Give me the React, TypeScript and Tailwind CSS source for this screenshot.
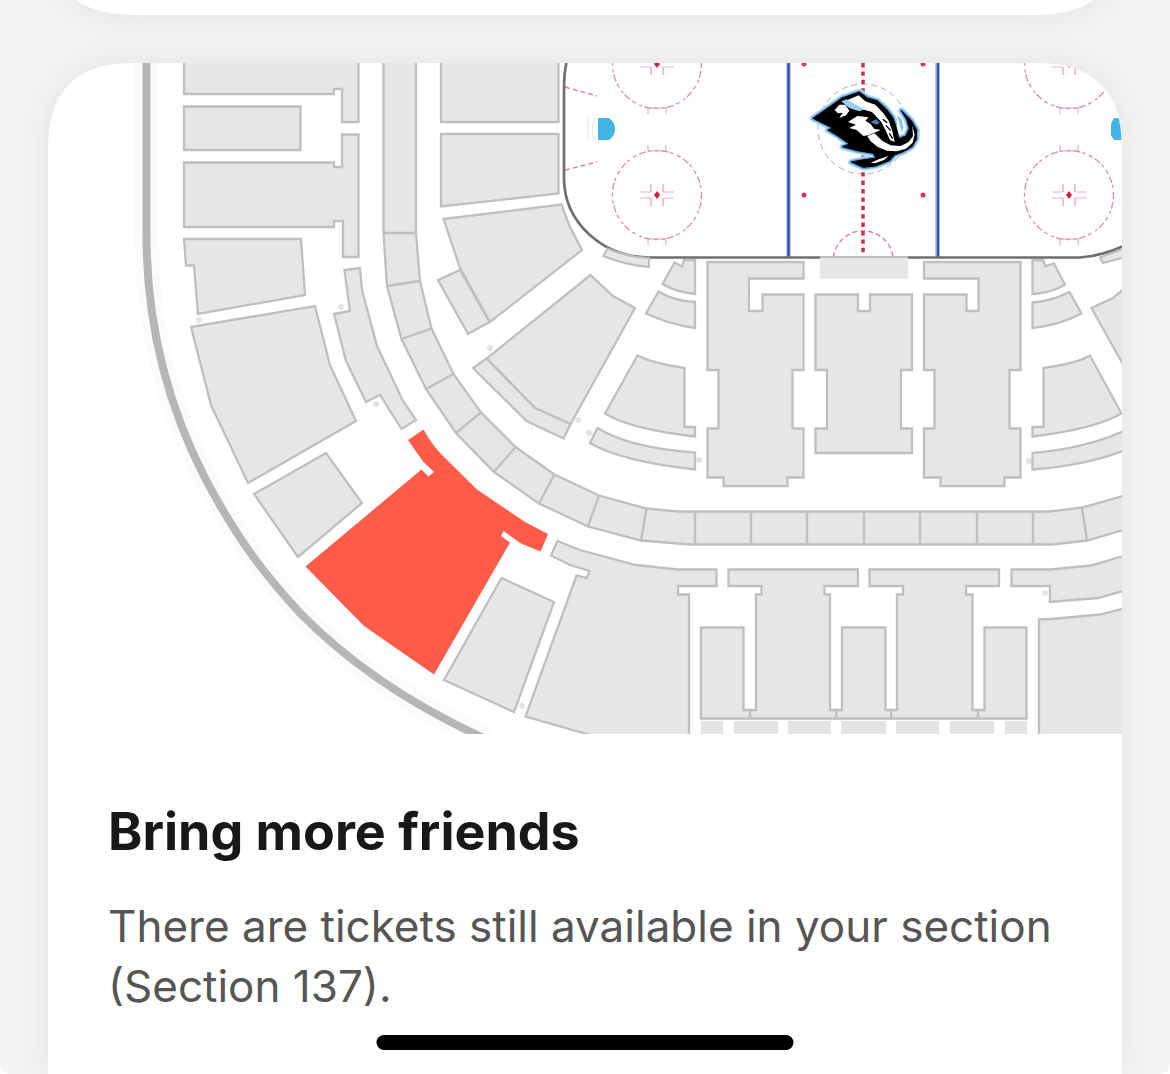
import React from 'react';

// Seating blocks, drawn in the map's own coordinate space
const sections = [
  // west side, upper bowl
  'M184 50V94H334V89H342V122H358.500V50Z',
  'M184 106.500H300.500V150H184Z',
  'M184 162.500H334V167H342V134.500H358.500V257H343V221H334V227H184Z',
  'M184 239H301L305 295L198 314L194 265.500H186Z',
  'M344.500 270L347 289L350 311L334 314L346 361L366 402L380 395L401.500 429L416 420L403 401L377 346L362 290L360 268Z',
  'M191 327L315 306L330 365L356 421L248 483L211 405Z',
  'M254 494L326 453L362 503L298 557Z',
  'M501.500 578L554 602L514 712L444 680Z',
  // west side, lower bowl
  'M441 50V122H558.500V50Z',
  'M441 134H558.500V193.500L441 206.500Z',
  'M443.500 219L561.500 204.500L569 225L582 250L490 322L460 268Z',
  'M460 270L438 280L468 334L489.500 322Z',
  'M590.500 275L613 296L635 308L570.500 424L535 408L486.500 358.500Z',
  'M486.500 358.500L473 368L526.500 421L563.500 438.500L570.500 424L535 408Z',
  'M637.500 355.500Q652 363 684.500 368V427H695V436.500Q630 429 605 413.500Z',
  'M597.500 428Q630 448 695 452.500V469.500Q620 461 590 443Z',
  'M674.500 262.500L682 266.500L684 260H695V294Q676 292 662.500 284Z',
  'M658.500 291.500Q674 301 695 302V328Q668 324 646 313.500Z',
  // south side, lower bowl
  'M707.500 262H803.500V278.500H749V311H762.500V294.500H803.500V370H792.500V428.500H803.500V477.500H787.500V486H723.500V477.500H707.500V428.500H718.500V370H707.500Z',
  'M815.500 294.500H858V311H870V294.500H912V370H901V428.500H912V453H815.500V428.500H827V370H815.500Z',
  'M924 262H1020.500V370H1009.500V428.500H1020.500V477.500H1004.500V486H940.500V477.500H924V428.500H934.500V370H924V294.500H966.500V311H978.500V278.500H924Z',
  'M1032.500 260H1043L1045.500 266L1054 263.500L1065 284.500Q1052 293 1032.500 294Z',
  'M1032.500 302.500Q1052 301 1069.500 292L1081.500 313.500Q1060 325 1032.500 328Z',
  'M1043.500 368Q1078 363 1090 355.500L1121.500 413.500Q1095 429 1032.500 436.500V427H1043.500Z',
  'M1032.500 453Q1090 448 1130 428V448Q1090 465 1032.500 469.500Z',
  'M1130 284L1113 298L1091.500 308L1130 377Z',
  // south side, upper bowl
  'M557.500 541L580 550L636 565L678 569.500H716.500V586H678V594.500H689V745H625L525.500 716.500L576.500 575.500L587 578L589.500 571L570 565L551 555.500Z',
  'M728.500 569.500H858V586H824.500V594.500H830V710H836.500V718.500H750V710H756V594.500H761.500V586H728.500Z',
  'M869.500 569.500H999V586H966V594.500H972.500V710H978V718.500H891V710H897V594.500H903V586H869.500Z',
  'M701 627.500H743.500V710H750V718.500H701Z',
  'M842 627.500H885.500V710H891V718.500H836.500V710H842Z',
  'M984.500 627.500H1026.500V718.500H978V710H984.500Z',
  'M1011.500 569.500H1050L1091 565.500L1130 554V589L1098 598L1050 602V586H1011.500Z',
  'M1039 619.500L1051 619L1100 614.500L1130 607V745H1039Z',
  // suite ring
  'M383.500 50V233L387 286L401.500 339L426 389L456 433L494 472L539 503.500L588 526.500L641 540.500L690 544.500H1052L1087 540.500L1130 528V494L1082 507.500L1050 511.500H678L646.500 508.500L599 495.500L554.500 474.500L515.500 447L481 412.500L453.500 374L431.500 328.500L420 281L416 233V50Z',
];

const suiteDividers =
  'M383.500 233H416M387 286L420 281M401.500 339L431.500 328.500M426 389L453.500 374M456 433L481 412.500M494 472L515.500 447M539 503.500L554.500 474.500M588 526.500L599 495.500M641 540.500L646.500 508.500M695 511V544M751 511V544M807 511V544M864 511V544M920 511V544M977 511V544M1033 511V544M1087 540.500L1082 507.500';

const selectedSection =
  'M408 440L423.500 429.500Q431 443 440 453L477 489.500L525 522L548 534L540.500 551.500L521 543.500L503.500 531L501 536L510 542.500L434 674.500L364 626L305.500 566.500L421.500 469.500L428.500 476.500L434 472L423 461.500Z';

const concourseTabs = [
  { x: 701, width: 22 },
  { x: 734, width: 44 },
  { x: 788, width: 43 },
  { x: 841, width: 45 },
  { x: 896, width: 43 },
  { x: 950, width: 44 },
  { x: 1005, width: 22 },
];

const markers = [
  [199, 320], [341, 307], [376, 404], [490, 348], [578, 420],
  [589, 433], [699, 460], [522, 706], [1029, 461], [1045, 593],
];

const outerWall =
  'M146.500 50V235C146.500 330 170 410 205 478C240 545 270 580 300 613C350 664 410 705 490 741';

const logoShape =
  'M33 115L78 84L120 54L172 36L196 54L225 62L252 86L272 112L284 145L290 176L312 168L322 145L314 118L298 92L328 122L344 150L343 178L330 200L302 216L278 224L262 242L220 258L184 262L148 246L180 240L222 234L214 220L166 212L122 200L142 192L108 168L78 150L92 144Z';

const FaceoffCircle: React.FC<{ cx: number; cy: number }> = ({ cx, cy }) => (
  <g transform={`translate(${cx} ${cy})`} fill="none" stroke="#e28a9c" strokeWidth="1">
    <circle r="44.500" strokeWidth="1.300" strokeDasharray="4 3 7 2 3 4" />
    <path d="M-17 -3H-6M-17 3H-6M6 -3H17M6 3H17" stroke="#eeb3be" />
    <path d="M-6 -11V-3M-6 3V11M6 -11V-3M6 3V11" />
    <path d="M-9 -50V-44H9V-50M-9 50V44H9V50" stroke="#e8a3b0" />
    <path d="M0 -4L3 0L0 4L-3 0Z" fill="#cf2145" stroke="none" />
  </g>
);

const TeamLogo: React.FC = () => (
  <g transform="translate(802 80) scale(0.3333)" strokeLinejoin="round">
    <path d={logoShape} fill="none" stroke="#b5daf6" strokeWidth="20" />
    <path d={logoShape} fill="#000" stroke="#5fa3dd" strokeWidth="11" />
    <path d={logoShape} fill="#000" stroke="#000" strokeWidth="3" />
    <g fill="#fff">
      <path d="M128 64L170 46L190 64L220 74L243 98L260 122L270 150L278 186L264 180L252 154L238 126L210 96L176 86L150 80Z" />
      <path d="M98 90L112 74L130 74L142 92L132 106L112 114L122 98L108 100Z" />
      <path d="M138 126L166 108L200 112L190 122L206 132L216 146L236 150L214 160L198 166L184 168L164 150L142 144L162 134Z" />
      <path d="M196 168L218 160L240 182L266 196L296 198L320 186L333 168L331 136L338 164L332 188L312 206L284 214L254 212L226 200L206 184Z" />
      <path d="M206 248L230 238L260 228L246 240L220 250Z" />
      <path d="M288 112L302 134L304 158L292 166L284 140Z" />
    </g>
    <path d="M118 64L134 58L158 72L188 88L172 94L142 84Z" fill="#9ccdf2" />
    <path d="M286 106L298 116L304 142L300 160L294 138Z" fill="#8ec3ef" />
    <path d="M206 126L222 118L234 128L222 134Z" fill="#3f7fb5" />
    <path d="M262 160L272 176M252 136L266 152M242 118L256 128" stroke="#000" strokeWidth="4" />
  </g>
);

const Rink: React.FC = () => (
  <g>
    <path
      d="M567 60Q564 72 564 86V178C564 222 602 257.500 650 257.500H1080Q1104 256 1130 243V50H567Z"
      fill="#fff"
    />
    <g fill="none" stroke="#e07a8f" strokeWidth="1.300" strokeDasharray="5 3">
      <path d="M565 87L597 96" />
      <path d="M565 170L597 162" />
      <path d="M833.500 257A30 30 0 0 1 893 257" />
    </g>
    <FaceoffCircle cx={657} cy={64} />
    <FaceoffCircle cx={657} cy={195} />
    <FaceoffCircle cx={1069} cy={64} />
    <FaceoffCircle cx={1069} cy={195} />

    <path d="M598 118H609Q615 122 615 129T609 140H598Z" fill="#42b4e6" />
    <path d="M596 118Q592 122 592 129T596 140M588 118V140" fill="none" stroke="#e3e3e6" />
    <path d="M1130 118H1114L1111 124V135L1114 140H1130Z" fill="#42b4e6" />

    <g fill="none" stroke="#a9bbe6" strokeWidth="4.500">
      <path d="M788.500 60V257M937.500 60V257" />
      <path d="M788.500 60V257M938 60V257" stroke="#3557a6" strokeWidth="2.500" />
    </g>
    <circle cx="863" cy="129" r="45" fill="none" stroke="#9fb0d8" strokeWidth="1" strokeDasharray="6 4" />
    <path d="M863 63V257" stroke="#d02c50" strokeWidth="3.500" strokeDasharray="4.400 4" />
    <g fill="#d2395a">
      {[804, 923].map((x) => (
        <React.Fragment key={x}>
          <circle cx={x} cy="64" r="2.500" />
          <circle cx={x} cy="195" r="2.500" />
        </React.Fragment>
      ))}
    </g>
    <TeamLogo />

    <path
      d="M567 60Q564 72 564 86V178C564 222 602 257.500 650 257.500H1080Q1104 256 1130 243"
      fill="none"
      stroke="#6f6f70"
      strokeWidth="2.700"
    />
    <g fill="#e6e6e8" stroke="#bdbdbf" strokeWidth="2">
      <path d="M607 248.500Q627 257 649 258V267Q625 265 603.500 256Z" />
      <path d="M1100 257.500L1130 246V256L1103 263Z" />
    </g>
    <path d="M820 257H908V278.500H820Z" fill="#e6e6e8" />
    <path d="M820 257H908" stroke="#bdbdbf" strokeWidth="2" />
  </g>
);

const SeatMap: React.FC = () => (
  <svg
    viewBox="48 63 1074 671"
    className="block w-full"
    role="img"
    aria-label="Arena seating map with Section 137 highlighted"
  >
    <path d={outerWall} fill="none" stroke="#fbfbfb" strokeWidth="24" />
    <path d={outerWall} fill="none" stroke="#b5b6b8" strokeWidth="8" />
    <g fill="#e3e3e6">
      {markers.map(([cx, cy]) => (
        <circle key={`${cx}-${cy}`} cx={cx} cy={cy} r="3" />
      ))}
      {concourseTabs.map((tab) => (
        <rect key={tab.x} x={tab.x} y="721" width={tab.width} height="20" />
      ))}
    </g>
    <g fill="#e6e6e8" stroke="#bfbfc1" strokeWidth="2.300">
      {sections.map((d) => (
        <path key={d} d={d} />
      ))}
      <path d={suiteDividers} />
    </g>
    <path d={selectedSection} fill="#ff5b49" />
    <Rink />
  </svg>
);

export default function App() {
  return (
    <div className="h-screen bg-white">
      <main className="relative flex h-full flex-col overflow-hidden rounded-b-[10px] bg-[#f4f4f4] px-12 font-[Inter,sans-serif]">
        <div className="-mt-[225px] mb-12 h-60 shrink-0 rounded-[92px] bg-white shadow-[0_0_36px_rgba(0,0,0,0.08)] [corner-shape:superellipse(1.4)]" />

        <article className="flex-1 overflow-hidden rounded-t-[92px] bg-white shadow-[0_0_36px_rgba(0,0,0,0.08)] [corner-shape:superellipse(1.4)]">
          <SeatMap />
          <div className="px-15 pt-16">
            <h2 className="text-[52px] leading-[68px] font-bold text-[#181818]">Bring more friends</h2>
            <p className="mt-[30px] text-[44px] leading-[60px] text-[#555]">
              There are tickets still available in your section (Section 137).
            </p>
          </div>
        </article>

        <div className="absolute bottom-6 left-1/2 h-[15px] w-[417px] -translate-x-1/2 rounded-full bg-black" />
      </main>
    </div>
  );
}
